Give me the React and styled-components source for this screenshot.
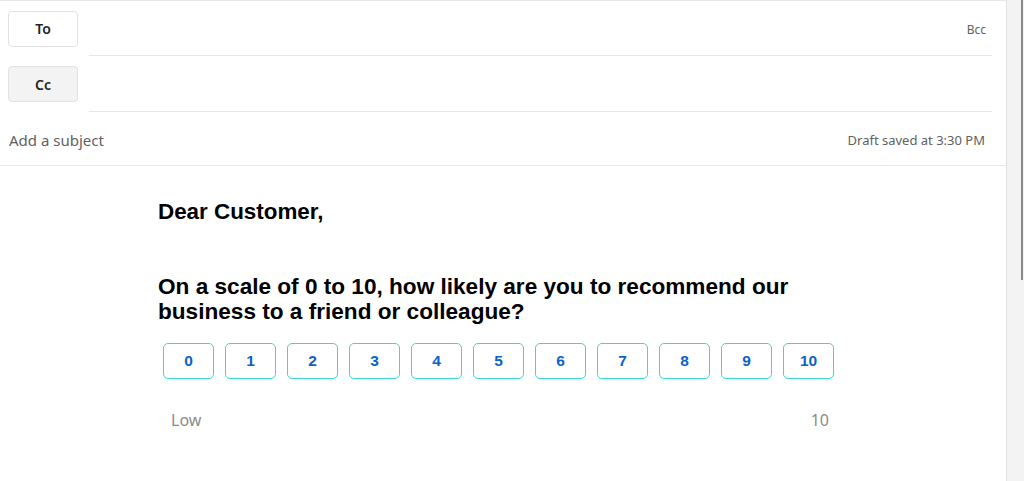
import styled, { createGlobalStyle } from 'styled-components'

const GlobalStyle = createGlobalStyle`
  body {
    margin: 0;
    background: #f3f3f3;
    font-family: 'Segoe UI', 'Noto Sans', sans-serif;
  }
`

const Shell = styled.div`
  display: flex;
  height: 481px;
  overflow: hidden;
`

const Pane = styled.div`
  width: 1006px;
  background: #fff;
  border-top: 1px solid #e6e6e6;
  border-right: 1px solid #e1e1e1;
`

const Gutter = styled.div`
  flex: 1;
  position: relative;
  background: #f3f3f3;
`

const Thumb = styled.div`
  position: absolute;
  right: 1px;
  top: 0;
  width: 2px;
  height: 280px;
  background: #8a8a8a;
`

const RecipientRow = styled.div`
  display: flex;
  align-items: center;
  height: ${(p) => p.$height || 55}px;
  padding-right: 14px;
`

const RecipientButton = styled.button`
  width: 70px;
  height: 36px;
  margin: 0 11px 0 8px;
  border: 1px solid #e1e1e1;
  border-radius: 4px;
  background: ${(p) => (p.$pressed ? '#f3f3f3' : '#fff')};
  font-family: 'Segoe UI', 'Noto Sans', sans-serif;
  font-size: 14px;
  font-weight: 600;
  color: #242424;
  padding: 0;
`

const Field = styled.div`
  flex: 1;
  align-self: stretch;
  display: flex;
  align-items: center;
  justify-content: flex-end;
  border-bottom: 1px solid #e6e6e6;
  padding: 2px 6px 0 0;
  font-size: 12px;
  color: #616161;
`

const SubjectRow = styled.div`
  display: flex;
  align-items: center;
  justify-content: space-between;
  height: 54px;
  padding: 3px 21px 0 9px;
  box-sizing: border-box;
  border-bottom: 1px solid #e6e6e6;
`

const Subject = styled.span`
  font-size: 15px;
  color: #616161;
`

const Saved = styled.span`
  font-size: 13px;
  color: #616161;
`

const Body = styled.div`
  padding: 33px 0 0 158px;
  width: 660px;
  font-family: 'Liberation Sans', Arial, sans-serif;
`

const Greeting = styled.p`
  margin: 0 0 50px;
  font-size: 22.4px;
  line-height: 25px;
  font-weight: 700;
  color: #000;
`

const Question = styled.p`
  margin: 0 0 19px;
  font-size: 22.6px;
  line-height: 25px;
  font-weight: 700;
  color: #000;
`

const Scale = styled.div`
  display: flex;
  gap: 11px;
  padding-left: 5px;
`

const Score = styled.a`
  display: flex;
  align-items: center;
  justify-content: center;
  box-sizing: border-box;
  min-width: 51px;
  height: 36px;
  padding: 0 18px;
  border: 1px solid #3fd8d0;
  border-radius: 5px;
  color: #0b63c8;
  font-size: 15.5px;
  font-weight: 700;
  text-decoration: none;
`

const Legend = styled.div`
  display: flex;
  justify-content: space-between;
  width: 658px;
  padding: 30px 0 0 13px;
  font-family: 'Segoe UI', 'Noto Sans', sans-serif;
  font-size: 16px;
  color: #8a8a8a;
`

const scores = [0, 1, 2, 3, 4, 5, 6, 7, 8, 9, 10]

const App = () => {
  return (
    <>
      <GlobalStyle />
      <Shell>
        <Pane>
          <RecipientRow>
            <RecipientButton>To</RecipientButton>
            <Field>Bcc</Field>
          </RecipientRow>
          <RecipientRow $height={56}>
            <RecipientButton $pressed>Cc</RecipientButton>
            <Field />
          </RecipientRow>
          <SubjectRow>
            <Subject>Add a subject</Subject>
            <Saved>Draft saved at 3:30 PM</Saved>
          </SubjectRow>
          <Body>
            <Greeting>Dear Customer,</Greeting>
            <Question>
              On a scale of 0 to 10, how likely are you to recommend our
              business to a friend or colleague?
            </Question>
            <Scale>
              {scores.map((n) => (
                <Score key={n} href="#">
                  {n}
                </Score>
              ))}
            </Scale>
            <Legend>
              <span>Low</span>
              <span>10</span>
            </Legend>
          </Body>
        </Pane>
        <Gutter>
          <Thumb />
        </Gutter>
      </Shell>
    </>
  )
}

export default App
